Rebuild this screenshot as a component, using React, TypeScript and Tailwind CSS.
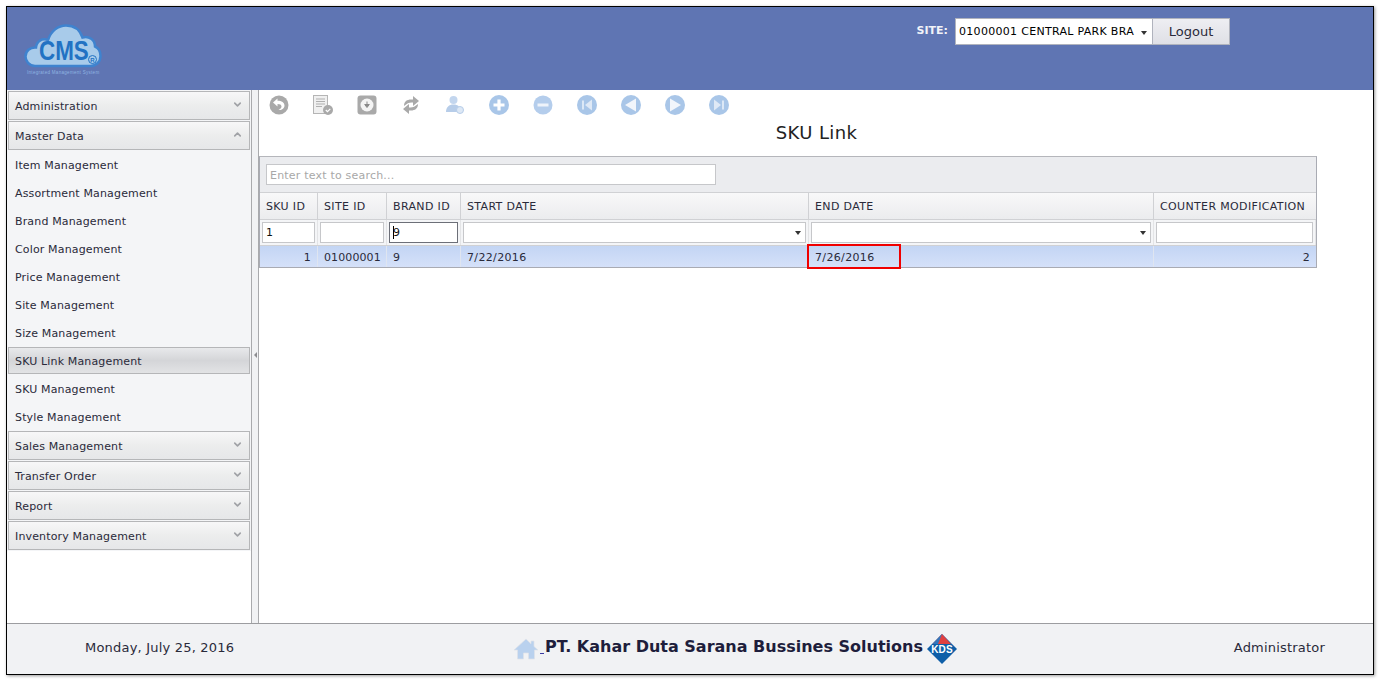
import { ChevronDown, ChevronUp } from 'lucide-react';

const font = 'font-["DejaVu_Sans",Verdana,sans-serif]';

const items = [
  'Item Management',
  'Assortment Management',
  'Brand Management',
  'Color Management',
  'Price Management',
  'Site Management',
  'Size Management',
  'SKU Link Management',
  'SKU Management',
  'Style Management',
];

const columns = 'grid grid-cols-[58px_69px_74px_348px_345px_162px]';

function NavHeader({ label, open }: { label: string; open?: boolean }) {
  const Icon = open ? ChevronUp : ChevronDown;
  return (
    <div className="mx-px mb-px flex h-[29px] items-center justify-between border border-[#b5b6b8] bg-gradient-to-b from-[#f7f7f8] via-[#eceded] to-[#e6e7e9] pl-[6px] pr-[6px]">
      <span className="pt-[3px] text-[11px] tracking-[0.15px] text-[#2a2a3a]">{label}</span>
      <Icon size={11} strokeWidth={3.5} className="mb-[2px] text-[#a0a2a6]" />
    </div>
  );
}

function ToolIcon({ children }: { children: React.ReactNode }) {
  return (
    <svg viewBox="0 0 20 20" className="h-5 w-5 shrink-0">
      {children}
    </svg>
  );
}

function Toolbar() {
  const grey = '#a9a9a9';
  const blue = '#a9c6e8';
  return (
    <div className="flex h-[30px] items-center gap-6 pl-[10px]">
      {/* back */}
      <ToolIcon>
        <circle cx="10" cy="10" r="9.5" fill={grey} />
        <path d="M8.500 3.500 4 7.500l4.500 4V9c2.500 0 4 .8 4 2.500 0 1.500-1.300 2.600-3 3.500 3.500.3 6-1.800 6-4.500 0-3-2.800-4.700-7-4.700z" fill="#fff" />
      </ToolIcon>
      {/* document */}
      <ToolIcon>
        <rect x="0.500" y="0.500" width="14" height="18" fill="#f0f0f0" stroke="#b5b5b5" />
        <path d="M3 4h9M3 6.500h9M3 9h9M3 11.500h6" stroke="#b0b0b0" strokeWidth="1" />
        <circle cx="15" cy="15" r="5" fill={grey} />
        <path d="m12.800 15 1.700 1.700 2.800-2.800" stroke="#fff" strokeWidth="1.200" fill="none" />
      </ToolIcon>
      {/* download */}
      <ToolIcon>
        <rect x="0.500" y="0.500" width="19" height="19" rx="3" fill={grey} />
        <circle cx="10" cy="10" r="6.500" fill="#f4f4f4" />
        <path d="M10 6.500v3.500M7.700 9.500 10 12.500l2.300-3z" stroke="#8a8a8a" fill="#8a8a8a" />
      </ToolIcon>
      {/* refresh */}
      <ToolIcon>
        <path d="M3 11C3 6.500 6 4.500 10 4.500h2V1L18 6l-6 5V7.500h-1.500C8 7.500 6 8.500 3 11z" fill={grey} />
        <path d="M17 9c0 4.500-3 6.500-7 6.500H8V19L2 14l6-5v3.500h1.500c2.500 0 4.500-1 7.500-3.500z" fill={grey} />
      </ToolIcon>
      {/* user */}
      <ToolIcon>
        <circle cx="8.500" cy="5" r="4" fill="#c3d6ee" />
        <path d="M1 17c0-5 3-7.500 7.500-7.500S16 12 16 17z" fill="#b7cde9" />
        <circle cx="15" cy="15" r="3.500" fill="#dde8f5" stroke="#b7cde9" />
      </ToolIcon>
      {/* add */}
      <ToolIcon>
        <circle cx="10" cy="10" r="10" fill={blue} />
        <path d="M10 4.500v11M4.500 10h11" stroke="#fff" strokeWidth="3.200" />
      </ToolIcon>
      {/* remove */}
      <ToolIcon>
        <circle cx="10" cy="10" r="9.500" fill="#b4cdec" />
        <path d="M4.500 10h11" stroke="#eef3fa" strokeWidth="3" />
      </ToolIcon>
      {/* first */}
      <ToolIcon>
        <circle cx="10" cy="10" r="10" fill={blue} />
        <path d="M6 5.500v9" stroke="#fff" strokeWidth="1.200" />
        <path d="M15 4.500v11L8 10z" fill="#dfe9f6" />
      </ToolIcon>
      {/* prev */}
      <ToolIcon>
        <circle cx="10" cy="10" r="10" fill={blue} />
        <path d="M15 3.500v13L4 10z" fill="#f1f5fb" />
      </ToolIcon>
      {/* next */}
      <ToolIcon>
        <circle cx="10" cy="10" r="10" fill={blue} />
        <path d="M5 3.500v13L16 10z" fill="#f1f5fb" />
      </ToolIcon>
      {/* last */}
      <ToolIcon>
        <circle cx="10" cy="10" r="10" fill={blue} />
        <path d="M14 5.500v9" stroke="#fff" strokeWidth="1.200" />
        <path d="M5 4.500v11L12 10z" fill="#dfe9f6" />
      </ToolIcon>
    </div>
  );
}

function Logo() {
  return (
    <div className="relative h-[52px] w-[78px]">
      <svg viewBox="0 0 78 44" className="absolute left-0 top-0 h-[44px] w-[78px]">
        <path
          d="M11 42C5 42 1.500 37 1.500 32.500 1.500 27 6 23 12 23.500 12.500 17 18 14 24 16 27 7 34 1.500 42 1.500c8 0 14 4.500 16.500 12C65 11.500 71 16 71 22.500c3.500 1.500 5.500 5.500 5.500 9.500 0 6-4.500 10-10 10z"
          fill="#a8cbea"
          stroke="#3f83cf"
          strokeWidth="2.500"
        />
      </svg>
      <span className="absolute left-[15px] top-[12px] origin-left font-['Liberation_Sans',sans-serif] text-[28px] leading-[30px] font-bold text-[#2272c3] [transform:scaleX(0.8)]">
        CMS
      </span>
      <span className="absolute left-[64px] top-[31px] flex h-[9px] w-[9px] items-center justify-center rounded-full border border-[#2272c3] font-['Liberation_Sans',sans-serif] text-[6px] leading-none font-bold text-[#2272c3]">
        R
      </span>
      <span className="absolute left-[3px] top-[46px] whitespace-nowrap font-['Liberation_Sans',sans-serif] text-[4.500px] leading-[6px] tracking-[0.3px] text-[#8fb4e2]">
        Integrated Management System
      </span>
    </div>
  );
}

function HeaderCell({ label, last }: { label: string; last?: boolean }) {
  return (
    <div className={`flex items-center overflow-hidden pl-[6px] pt-[2px] text-[11px] tracking-[0.35px] whitespace-nowrap text-[#2a2a3a] ${last ? '' : 'border-r border-[#d0d1d4]'}`}>
      {label}
    </div>
  );
}

function FilterBox({ value, focus, select }: { value?: string; focus?: boolean; select?: boolean }) {
  return (
    <div className="flex items-center justify-center border-r border-[#e3e4e6] px-[2px]">
      <div
        className={`flex h-[21px] w-full items-center justify-between border bg-white pl-[3px] pr-1 text-[11px] text-[#111] ${
          focus ? 'border-[#6c6f78]' : 'border-[#c6c7ca]'
        }`}
      >
        <span className="pt-px">
          {focus && <span className="mr-[-1px] inline-block h-[13px] w-px bg-black align-middle" />}
          {value}
        </span>
        {select && <span className="h-0 w-0 border-x-[3.500px] border-t-[4px] border-x-transparent border-t-[#333]" />}
      </div>
    </div>
  );
}

function DataCell({ text, right, last, tight }: { text: string; right?: boolean; last?: boolean; tight?: boolean }) {
  return (
    <div
      className={`flex items-center px-[6px] pt-[3px] text-[11px] text-[#2a2a3a] ${tight ? 'tracking-[0.1px]' : 'tracking-[0.35px]'} ${right ? 'justify-end' : ''} ${
        last ? '' : 'border-r border-[#dfe5f0]'
      }`}
    >
      {text}
    </div>
  );
}

export default function App() {
  return (
    <div className={`h-[681px] w-[1380px] overflow-hidden bg-white p-[6px] pb-0 ${font}`}>
      <div className="flex h-[669px] flex-col border border-black shadow-[1px_1px_3px_#999]">
        {/* top bar */}
        <header className="flex h-[83px] shrink-0 justify-between bg-[#5f75b3] pl-[17px]">
          <div className="pt-[17px]">
            <Logo />
          </div>
          <div className="flex items-start pr-[143px] pt-[11px]">
            <span className="mr-[6px] mt-[5px] text-[11px] font-bold text-[#f1f3f8]">SITE:</span>
            <div className="ml-px flex h-[27px] w-[198px] items-center justify-between border border-[#b0b3bd] bg-white pl-[3px] pr-[5px] pt-[2px] text-[11px] tracking-[0.3px] text-black">
              <span className="whitespace-nowrap">01000001 CENTRAL PARK BRA</span>
              <span className="h-0 w-0 border-x-[3.500px] border-t-[4px] border-x-transparent border-t-[#333]" />
            </div>
            <button className="h-[27px] w-[77px] border border-l-0 border-[#b0b3bd] bg-gradient-to-b from-[#eeeef2] to-[#dfe0e6] text-[13px] text-[#2a2a3a]">
              Logout
            </button>
          </div>
        </header>

        <div className="flex min-h-0 flex-1">
          {/* left navigation */}
          <aside className="flex w-[244px] shrink-0 flex-col bg-[#f4f5f7] pt-px">
            <NavHeader label="Administration" />
            <NavHeader label="Master Data" open />
            <div>
              {items.map((item) =>
                item === 'SKU Link Management' ? (
                  <div
                    key={item}
                    className="mx-px mb-px flex h-[27px] items-center border border-[#b5b6b8] bg-gradient-to-b from-[#e8e9eb] via-[#d4d5d8] to-[#e2e3e5] pl-[6px] pt-[3px] text-[11px] tracking-[0.15px] text-[#2a2a3a]"
                  >
                    {item}
                  </div>
                ) : (
                  <div key={item} className="flex h-[28px] items-center pl-2 pt-[2px] text-[11px] tracking-[0.15px] text-[#2a2a3a]">
                    {item}
                  </div>
                ),
              )}
            </div>
            <NavHeader label="Sales Management" />
            <NavHeader label="Transfer Order" />
            <NavHeader label="Report" />
            <NavHeader label="Inventory Management" />
            <div className="flex-1 bg-white" />
          </aside>

          {/* splitter */}
          <div className="flex w-[8px] shrink-0 items-center justify-center border-x border-[#a9aaad] bg-[#f1f2f4] pb-[3px]">
            <span className="h-0 w-0 border-y-[3px] border-r-[3px] border-y-transparent border-r-[#8c8c90]" />
          </div>

          {/* main content */}
          <main className="relative min-w-0 flex-1 bg-white">
            <Toolbar />
            <h1 className="mt-px h-[35px] w-[1115px] text-center text-[18px] leading-[24px] tracking-[0.4px] text-[#222]">SKU Link</h1>

            <div className="w-[1058px] border border-[#a9abb3] border-t-[#b5b6bb]">
              <div className="flex h-[36px] items-center border-b border-[#d0d1d4] bg-[#ebecef] pl-[6px]">
                <div className="flex h-[21px] w-[450px] items-center border border-[#c6c7ca] bg-white pl-[3px] pt-[3px] text-[11px] tracking-[0.2px] text-[#a8a8a8]">
                  Enter text to search...
                </div>
              </div>
              <div className={`${columns} h-[27px] border-b border-[#d0d1d4] bg-gradient-to-b from-[#f8f8f9] to-[#ebecee]`}>
                <HeaderCell label="SKU ID" />
                <HeaderCell label="SITE ID" />
                <HeaderCell label="BRAND ID" />
                <HeaderCell label="START DATE" />
                <HeaderCell label="END DATE" />
                <HeaderCell label="COUNTER MODIFICATION" last />
              </div>
              <div className={`${columns} h-[26px] border-b border-[#d0d1d4] bg-[#f4f5f7]`}>
                <FilterBox value="1" />
                <FilterBox />
                <FilterBox value="9" focus />
                <FilterBox select />
                <FilterBox select />
                <FilterBox />
              </div>
              <div className={`${columns} h-[21px] bg-gradient-to-b from-[#c3d5f4] to-[#d5e1f9]`}>
                <DataCell text="1" right />
                <DataCell text="01000001" tight />
                <DataCell text="9" />
                <DataCell text="7/22/2016" />
                <DataCell text="7/26/2016" />
                <DataCell text="2" right last />
              </div>
            </div>

            {/* red highlight over the end date cell */}
            <div className="absolute left-[548px] top-[154px] h-[25px] w-[94px] border-2 border-[#f00000]" />
          </main>
        </div>

        {/* bottom bar */}
        <footer className="flex h-[51px] shrink-0 items-center justify-between border-t border-[#9c9da0] bg-[#f1f2f4] pl-[78px] pr-[48px] text-[13px] tracking-[0.2px] text-[#2a2a3a]">
          <span className="mb-[3px]">Monday, July 25, 2016</span>
          <div className="ml-[3px] flex items-center">
            <svg viewBox="0 0 24 22" className="h-[22px] w-[24px]">
              <path d="M12 1 0 12h3.500v9h6v-6h5v6h6v-9H24L20 8.500V3h-3v2.800z" fill="#b9d1ee" stroke="#dfe3e8" strokeWidth="0.700" />
            </svg>
            <span className="mb-[-9px] ml-[2px] h-px w-[4px] bg-[#3a3aa0]" />
            <span className="mb-[4px] ml-px text-[16px] font-bold tracking-[0px] text-[#1e1e3c]">PT. Kahar Duta Sarana Bussines Solutions</span>
            <svg viewBox="0 0 30 30" className="ml-[4px] h-[30px] w-[30px]">
              <path d="M15 0 30 15 15 30 0 15z" fill="#0f5fa8" />
              <path d="M15 0 6 10H24z" fill="#e04040" />
              <path d="M15 0 6 10H11z" fill="#2f78c0" />
              <text x="15" y="18.500" textAnchor="middle" fontSize="10" fontWeight="700" fill="#fff" fontFamily="Liberation Sans">KDS</text>
            </svg>
          </div>
          <span className="mb-[3px]">Administrator</span>
        </footer>
      </div>
    </div>
  );
}
